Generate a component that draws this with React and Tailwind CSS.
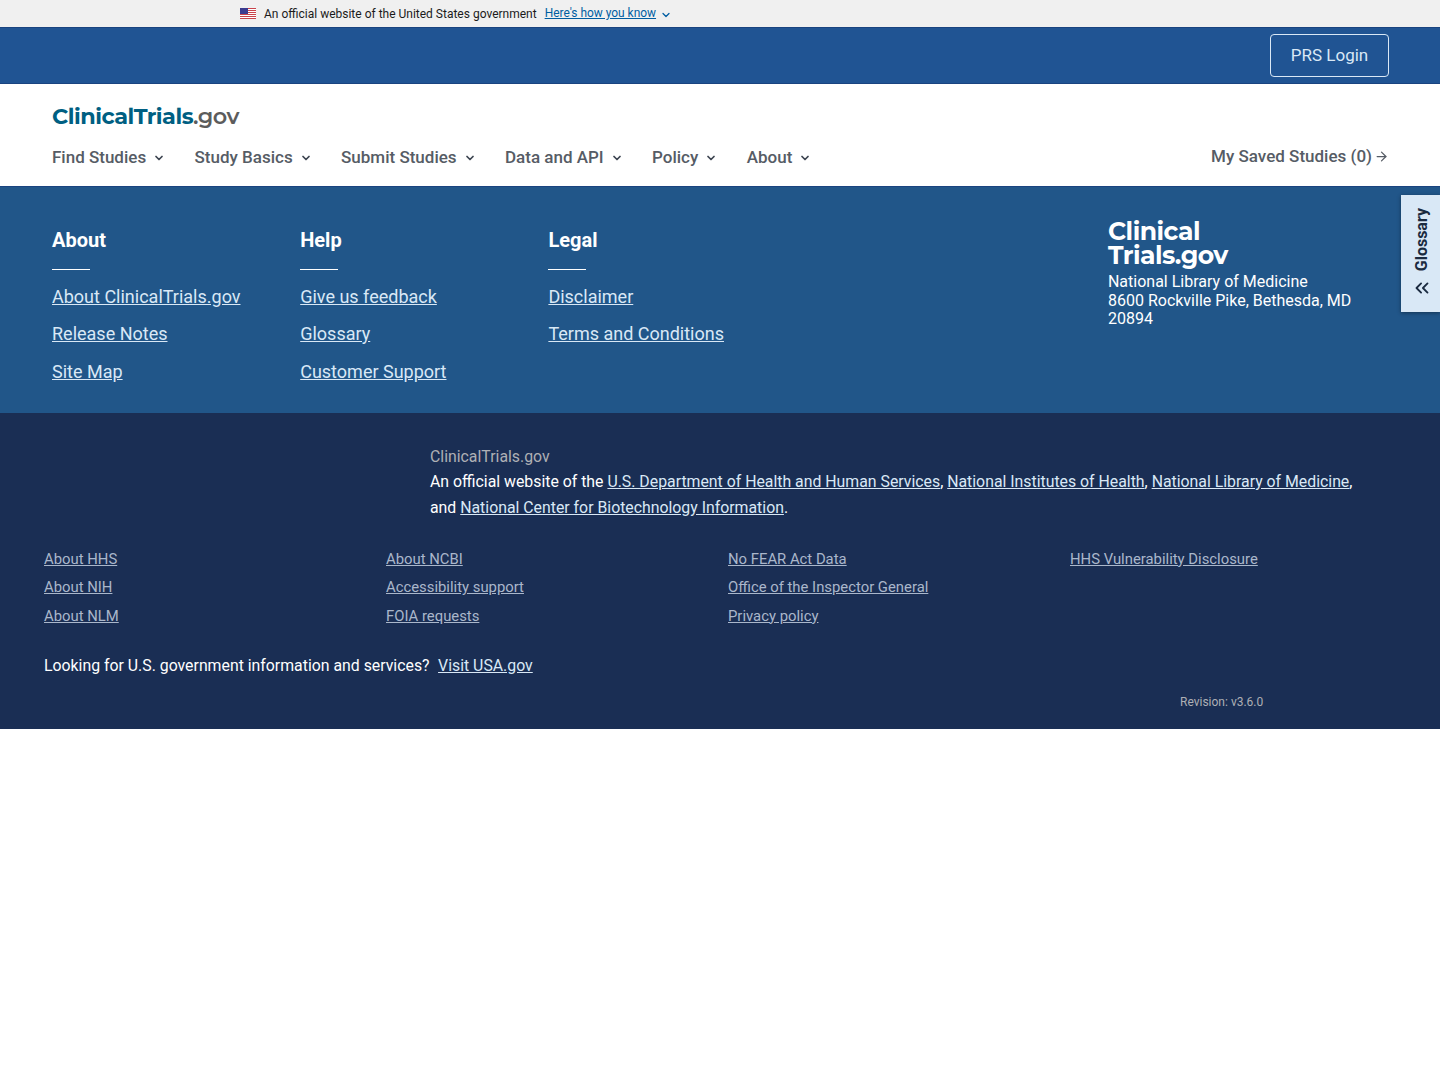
import { ChevronDown, ChevronsLeft, ArrowRight } from 'lucide-react'

const NAV = ['Find Studies', 'Study Basics', 'Submit Studies', 'Data and API', 'Policy', 'About']

const FOOT_COLS = [
  { title: 'About', links: ['About ClinicalTrials.gov', 'Release Notes', 'Site Map'] },
  { title: 'Help', links: ['Give us feedback', 'Glossary', 'Customer Support'] },
  { title: 'Legal', links: ['Disclaimer', 'Terms and Conditions'] },
]

const LINK_COLS = [
  ['About HHS', 'About NIH', 'About NLM'],
  ['About NCBI', 'Accessibility support', 'FOIA requests'],
  ['No FEAR Act Data', 'Office of the Inspector General', 'Privacy policy'],
  ['HHS Vulnerability Disclosure'],
]

function Flag() {
  return (
    <svg width="16" height="11" viewBox="0 0 16 11" className="block">
      <rect width="16" height="11" fill="#fff" />
      {[0, 2, 4, 6, 8, 10].map(y => <rect key={y} y={y} width="16" height="1" fill="#c9434b" />)}
      <rect width="8" height="6" fill="#3b3b8f" />
    </svg>
  )
}

export default function App() {
  return (
    <div className="font-['Roboto',sans-serif] bg-white min-h-[1080px]">
      {/* gov banner */}
      <div className="h-[27px] bg-[#f0f0f0] pl-[240px] flex items-center text-[12px] text-[#1b1b1b]">
        <Flag />
        <span className="ml-2">An official website of the United States government</span>
        <a className="ml-2 mt-[1px] text-[11.95px] text-[#005ea2] underline">Here's how you know</a>
        <ChevronDown className="ml-1 mt-[2px] w-3 h-3 text-[#005ea2]" strokeWidth={2.5} />
      </div>

      {/* top bar */}
      <div className="h-[57px] bg-[#205493] border-y border-[#1a4480] flex items-center justify-end pr-[51px]">
        <a className="w-[119px] h-[43px] flex items-center justify-center rounded-[4px] border border-[#d9e8f6] text-[#d9e8f6] text-[17px]">PRS Login</a>
      </div>

      {/* header */}
      <div className="h-[102px] px-[52px] flex flex-col">
        <div className="mt-[17px] h-[32px] flex items-center font-['Montserrat','Inter',sans-serif] text-[22.4px] font-bold tracking-[-0.5px]">
          <span className="text-[#005f82]">ClinicalTrials</span>
          <span className="text-[#5c5c5c] font-semibold">.gov</span>
        </div>
        <div className="mt-[12px] flex items-center justify-between">
          <div className="flex items-center gap-[29.4px]">
            {NAV.map(n => (
              <div key={n} className="flex items-center gap-[7px] text-[17px] font-medium text-[#565c65]">
                {n}
                <ChevronDown className="w-[12px] h-[12px] text-[#3d4551]" strokeWidth={3.5} />
              </div>
            ))}
          </div>
          <div className="flex items-center gap-[2px] mr-[-1px] text-[17px] font-medium text-[#565c65] -translate-y-[1px]">
            My Saved Studies (0)
            <ArrowRight className="w-[15px] h-[15px]" strokeWidth={2} />
          </div>
        </div>
      </div>

      {/* blue footer */}
      <div className="relative h-[227px] bg-[#215689] border-t border-[#1a4480] pl-[52px] pt-[40px] flex text-white">
        {FOOT_COLS.map(col => (
          <div key={col.title} className="w-[248.2px]">
            <h3 className="text-[20px] leading-[26px] font-bold">{col.title}</h3>
            <div className="w-[38px] h-px bg-white mt-[16px] mb-[14.5px]" />
            <div className="flex flex-col gap-[13px]">
              {col.links.map(l => (
                <a key={l} className="text-[18px] leading-[24.5px] underline text-[#d9e8f6]">{l}</a>
              ))}
            </div>
          </div>
        ))}
        <div className="ml-[311.4px] -mt-[8px] w-[260px] text-[16px] leading-[18.5px]">
          <div className="font-['Montserrat','Inter',sans-serif] text-[25.1px] leading-[24px] font-bold mb-[6px] tracking-[-0.5px]">
            Clinical<br />Trials.gov
          </div>
          <div>National Library of Medicine</div>
          <div>8600 Rockville Pike, Bethesda, MD 20894</div>
        </div>

        {/* glossary tab */}
        <div className="absolute right-0 top-[8px] w-[39px] h-[117px] bg-[#d9e8f6] shadow-[0_1px_4px_rgba(0,0,0,0.4)] flex flex-col items-center pt-[13px] pl-[3px] text-[#1b2b40]">
          <span className="text-[16px] leading-[20px] font-bold [writing-mode:vertical-rl] rotate-180">Glossary</span>
          <ChevronsLeft className="w-[22px] h-[22px] mt-[6px]" strokeWidth={2} />
        </div>
      </div>

      {/* dark footer */}
      <div className="h-[316px] bg-[#1a2e54] text-white">
        <div className="pl-[430px] pt-[32px] pr-[80px] text-[15.83px] leading-[26px]">
          <div className="text-[#aeb0b5] leading-[24px]">ClinicalTrials.gov</div>
          <div>
            An official website of the <a className="underline text-[#d9e8f6]">U.S. Department of Health and Human Services</a>, <a className="underline text-[#d9e8f6]">National Institutes of Health</a>, <a className="underline text-[#d9e8f6]">National Library of Medicine</a>, and <a className="underline text-[#d9e8f6]">National Center for Biotechnology Information</a>.
          </div>
        </div>
        <div className="pl-[44px] mt-[28.5px] grid grid-cols-[342px_342px_342px_1fr]">
          {LINK_COLS.map((col, i) => (
            <div key={i} className="flex flex-col gap-[9px]">
              {col.map(l => (
                <a key={l} className="text-[14.85px] leading-[19.5px] underline text-[#aab7cb]">{l}</a>
              ))}
            </div>
          ))}
        </div>
        <div className="pl-[44px] mt-[27.5px] text-[15.83px] leading-[24px]">
          Looking for U.S. government information and services?
          <a className="ml-[8.5px] underline text-[#d9e8f6]">Visit USA.gov</a>
        </div>
        <div className="pl-[1180px] mt-[16px] text-[12px] leading-[16px] text-[#aeb0b5]">Revision: v3.6.0</div>
      </div>
    </div>
  )
}
